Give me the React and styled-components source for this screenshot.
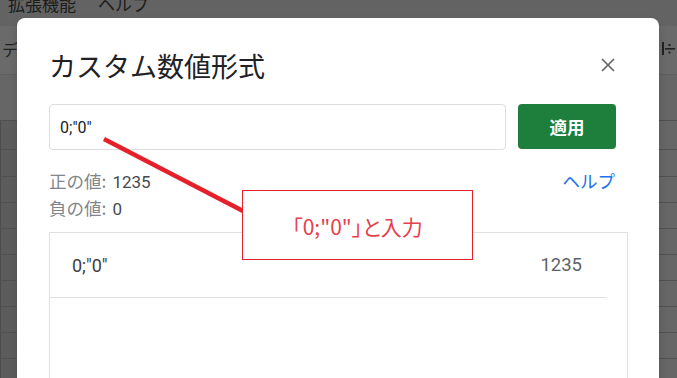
import React from "react";
import styled, { createGlobalStyle } from "styled-components";

const Global = createGlobalStyle`
  html, body { margin: 0; padding: 0; }
  body {
    width: 677px; height: 378px; overflow: hidden;
    font-family: Roboto, "Noto Sans CJK JP", sans-serif;
    background: #666666;
  }
  #root { width: 677px; height: 378px; }
`;

const Page = styled.div`
  position: relative;
  width: 677px;
  height: 378px;
  overflow: hidden;
  display: flex;
  flex-direction: column;
  background: #666666;
`;

/* ---------- dimmed spreadsheet behind the modal ---------- */
const MenuBar = styled.div`
  height: 26px;
  flex: none;
  display: flex;
  gap: 22px;
  padding-left: 8px;
  background: #636363;
  overflow: hidden;
`;
const MenuItem = styled.span`
  font-family: "Noto Sans CJK JP", sans-serif;
  font-size: 17px;
  line-height: 17px;
  margin-top: -5px;
  color: #1c1c1c;
`;
const Toolbar = styled.div`
  height: 49px;
  flex: none;
  display: flex;
  align-items: center;
  justify-content: space-between;
  background: #6a6a6a;
  border-bottom: 1px solid #5e5e5e;
  box-sizing: border-box;
`;
const ToolText = styled.span`
  font-family: "Noto Sans CJK JP", sans-serif;
  font-size: 16px;
  color: #222;
  margin-left: 2px;
  margin-top: -2px;
`;
const ToolIcon = styled.svg`
  margin-right: 2px;
  margin-top: -2px;
`;
const FormulaBar = styled.div`
  height: 46px;
  flex: none;
  background: #666666;
  border-bottom: 1px solid #4f4f4f;
  box-sizing: border-box;
`;
const Grid = styled.div`
  flex: 1;
  display: flex;
  flex-direction: column;
`;
const GridRow = styled.div`
  height: ${(p) => p.h}px;
  flex: none;
  display: flex;
  border-bottom: 1px solid #515151;
  box-sizing: border-box;
`;
const RowHead = styled.div`
  width: 17px;
  background: #5c5c5c;
  border-left: 1px solid #4d4d4d;
  box-sizing: border-box;
`;
const RowBody = styled.div`
  flex: 1;
  background: #666666;
`;

/* ---------- modal ---------- */
const Dialog = styled.div`
  position: absolute;
  left: 17px;
  top: 18px;
  width: 642px;
  height: 400px;
  background: #ffffff;
  border-radius: 8px;
  box-sizing: border-box;
  padding: 30px 31px 0 32px;
  display: flex;
  flex-direction: column;
  box-shadow: 0 4px 8px rgba(0, 0, 0, 0.15);
`;
const Header = styled.div`
  display: flex;
  align-items: center;
  justify-content: space-between;
  padding-right: 8px;
`;
const Title = styled.h1`
  margin: 0;
  font-family: "Noto Sans CJK JP", sans-serif;
  font-weight: 400;
  font-size: 27px;
  line-height: 36px;
  color: #202124;
`;
const CloseButton = styled.button`
  width: 24px;
  height: 24px;
  padding: 0;
  border: none;
  background: transparent;
  display: flex;
  align-items: center;
  justify-content: center;
  margin-top: -3px;
`;
const InputRow = styled.div`
  display: flex;
  align-items: flex-start;
  gap: 12px;
  margin: 20px 12px 0 0;
`;
const FormatInput = styled.div`
  flex: 1;
  height: 46px;
  box-sizing: border-box;
  border: 1px solid #dadce0;
  border-radius: 4px;
  display: flex;
  align-items: center;
  padding-left: 10px;
  font-size: 16px;
  color: #202124;
`;
const ApplyButton = styled.button`
  width: 98px;
  height: 45px;
  border: none;
  border-radius: 4px;
  background: #1e7e3b;
  color: #ffffff;
  font-family: "Noto Sans CJK JP", sans-serif;
  font-weight: 700;
  font-size: 17.5px;
  padding: 0;
`;
const InfoRow = styled.div`
  display: flex;
  justify-content: space-between;
  align-items: flex-start;
  margin: 17px 13px 0 0;
`;
const InfoLines = styled.div`
  display: flex;
  flex-direction: column;
`;
const InfoLine = styled.div`
  height: 27px;
  display: flex;
  align-items: baseline;
  gap: 6px;
  color: #80868b;
`;
const InfoLabel = styled.span`
  font-family: "Noto Sans CJK JP", sans-serif;
  font-size: 17.5px;
  line-height: 27px;
`;
const InfoValue = styled.span`
  font-family: Roboto, sans-serif;
  font-size: 17px;
  line-height: 27px;
  color: #45494e;
`;
const HelpLink = styled.a`
  font-family: "Noto Sans CJK JP", sans-serif;
  font-size: 17.5px;
  line-height: 27px;
  height: 27px;
  color: #1a73e8;
  text-decoration: none;
`;
const PreviewBox = styled.div`
  margin-top: 11px;
  flex: 1;
  border: 1px solid #e0e0e0;
  border-bottom: none;
`;
const PreviewRow = styled.div`
  height: 64px;
  margin-right: 20px;
  border-bottom: 1px solid #e0e0e0;
  display: flex;
  align-items: center;
  justify-content: space-between;
  padding: 0 25px 0 22px;
  font-size: 18px;
`;
const PreviewFormat = styled.span`
  color: #3c4043;
`;
const PreviewSample = styled.span`
  color: #5f6368;
  font-size: 18.5px;
`;

/* ---------- annotation ---------- */
const Pointer = styled.svg`
  position: absolute;
  left: 0;
  top: 0;
  pointer-events: none;
`;
const Callout = styled.div`
  position: absolute;
  left: 242px;
  top: 190px;
  width: 231px;
  height: 70px;
  box-sizing: border-box;
  border: 1.5px solid #e5202b;
  background: #ffffff;
  display: flex;
  align-items: center;
  justify-content: center;
  font-family: "Noto Sans CJK JP", sans-serif;
  font-feature-settings: "palt";
  font-size: 21px;
  color: #e8404a;
  padding-top: 1px;
`;

export default function App() {
  const rows = [29, 27, 26, 26, 26, 26, 26, 26, 26, 26];
  return (
    <>
      <Global />
      <Page>
        <MenuBar>
          <MenuItem>拡張機能</MenuItem>
          <MenuItem>ヘルプ</MenuItem>
        </MenuBar>
        <Toolbar>
          <ToolText>デ</ToolText>
          <ToolIcon width="14" height="16" viewBox="0 0 14 16">
            <rect x="1" y="1" width="2" height="13" fill="#222" />
            <rect x="4" y="7" width="10" height="1.6" fill="#222" />
            <rect x="7.5" y="3" width="2" height="2" fill="#222" />
            <rect x="7.5" y="10.5" width="2" height="2" fill="#222" />
          </ToolIcon>
        </Toolbar>
        <FormulaBar />
        <Grid>
          {rows.map((h, i) => (
            <GridRow key={i} h={h}>
              <RowHead />
              <RowBody />
            </GridRow>
          ))}
        </Grid>

        <Dialog>
          <Header>
            <Title>カスタム数値形式</Title>
            <CloseButton aria-label="閉じる">
              <svg width="14" height="14" viewBox="0 0 14 14">
                <path d="M1 1 L13 13 M13 1 L1 13" stroke="#5f6368" strokeWidth="1.6" fill="none" />
              </svg>
            </CloseButton>
          </Header>
          <InputRow>
            <FormatInput>0;"0"</FormatInput>
            <ApplyButton>適用</ApplyButton>
          </InputRow>
          <InfoRow>
            <InfoLines>
              <InfoLine>
                <InfoLabel>正の値:</InfoLabel>
                <InfoValue>1235</InfoValue>
              </InfoLine>
              <InfoLine>
                <InfoLabel>負の値:</InfoLabel>
                <InfoValue>0</InfoValue>
              </InfoLine>
            </InfoLines>
            <HelpLink href="#">ヘルプ</HelpLink>
          </InfoRow>
          <PreviewBox>
            <PreviewRow>
              <PreviewFormat>0;"0"</PreviewFormat>
              <PreviewSample>1235</PreviewSample>
            </PreviewRow>
          </PreviewBox>
        </Dialog>

        <Pointer width="677" height="378" viewBox="0 0 677 378">
          <line x1="104" y1="139" x2="243" y2="211" stroke="#e5202b" strokeWidth="4.5" />
        </Pointer>
        <Callout>「0;"0"」と入力</Callout>
      </Page>
    </>
  );
}
